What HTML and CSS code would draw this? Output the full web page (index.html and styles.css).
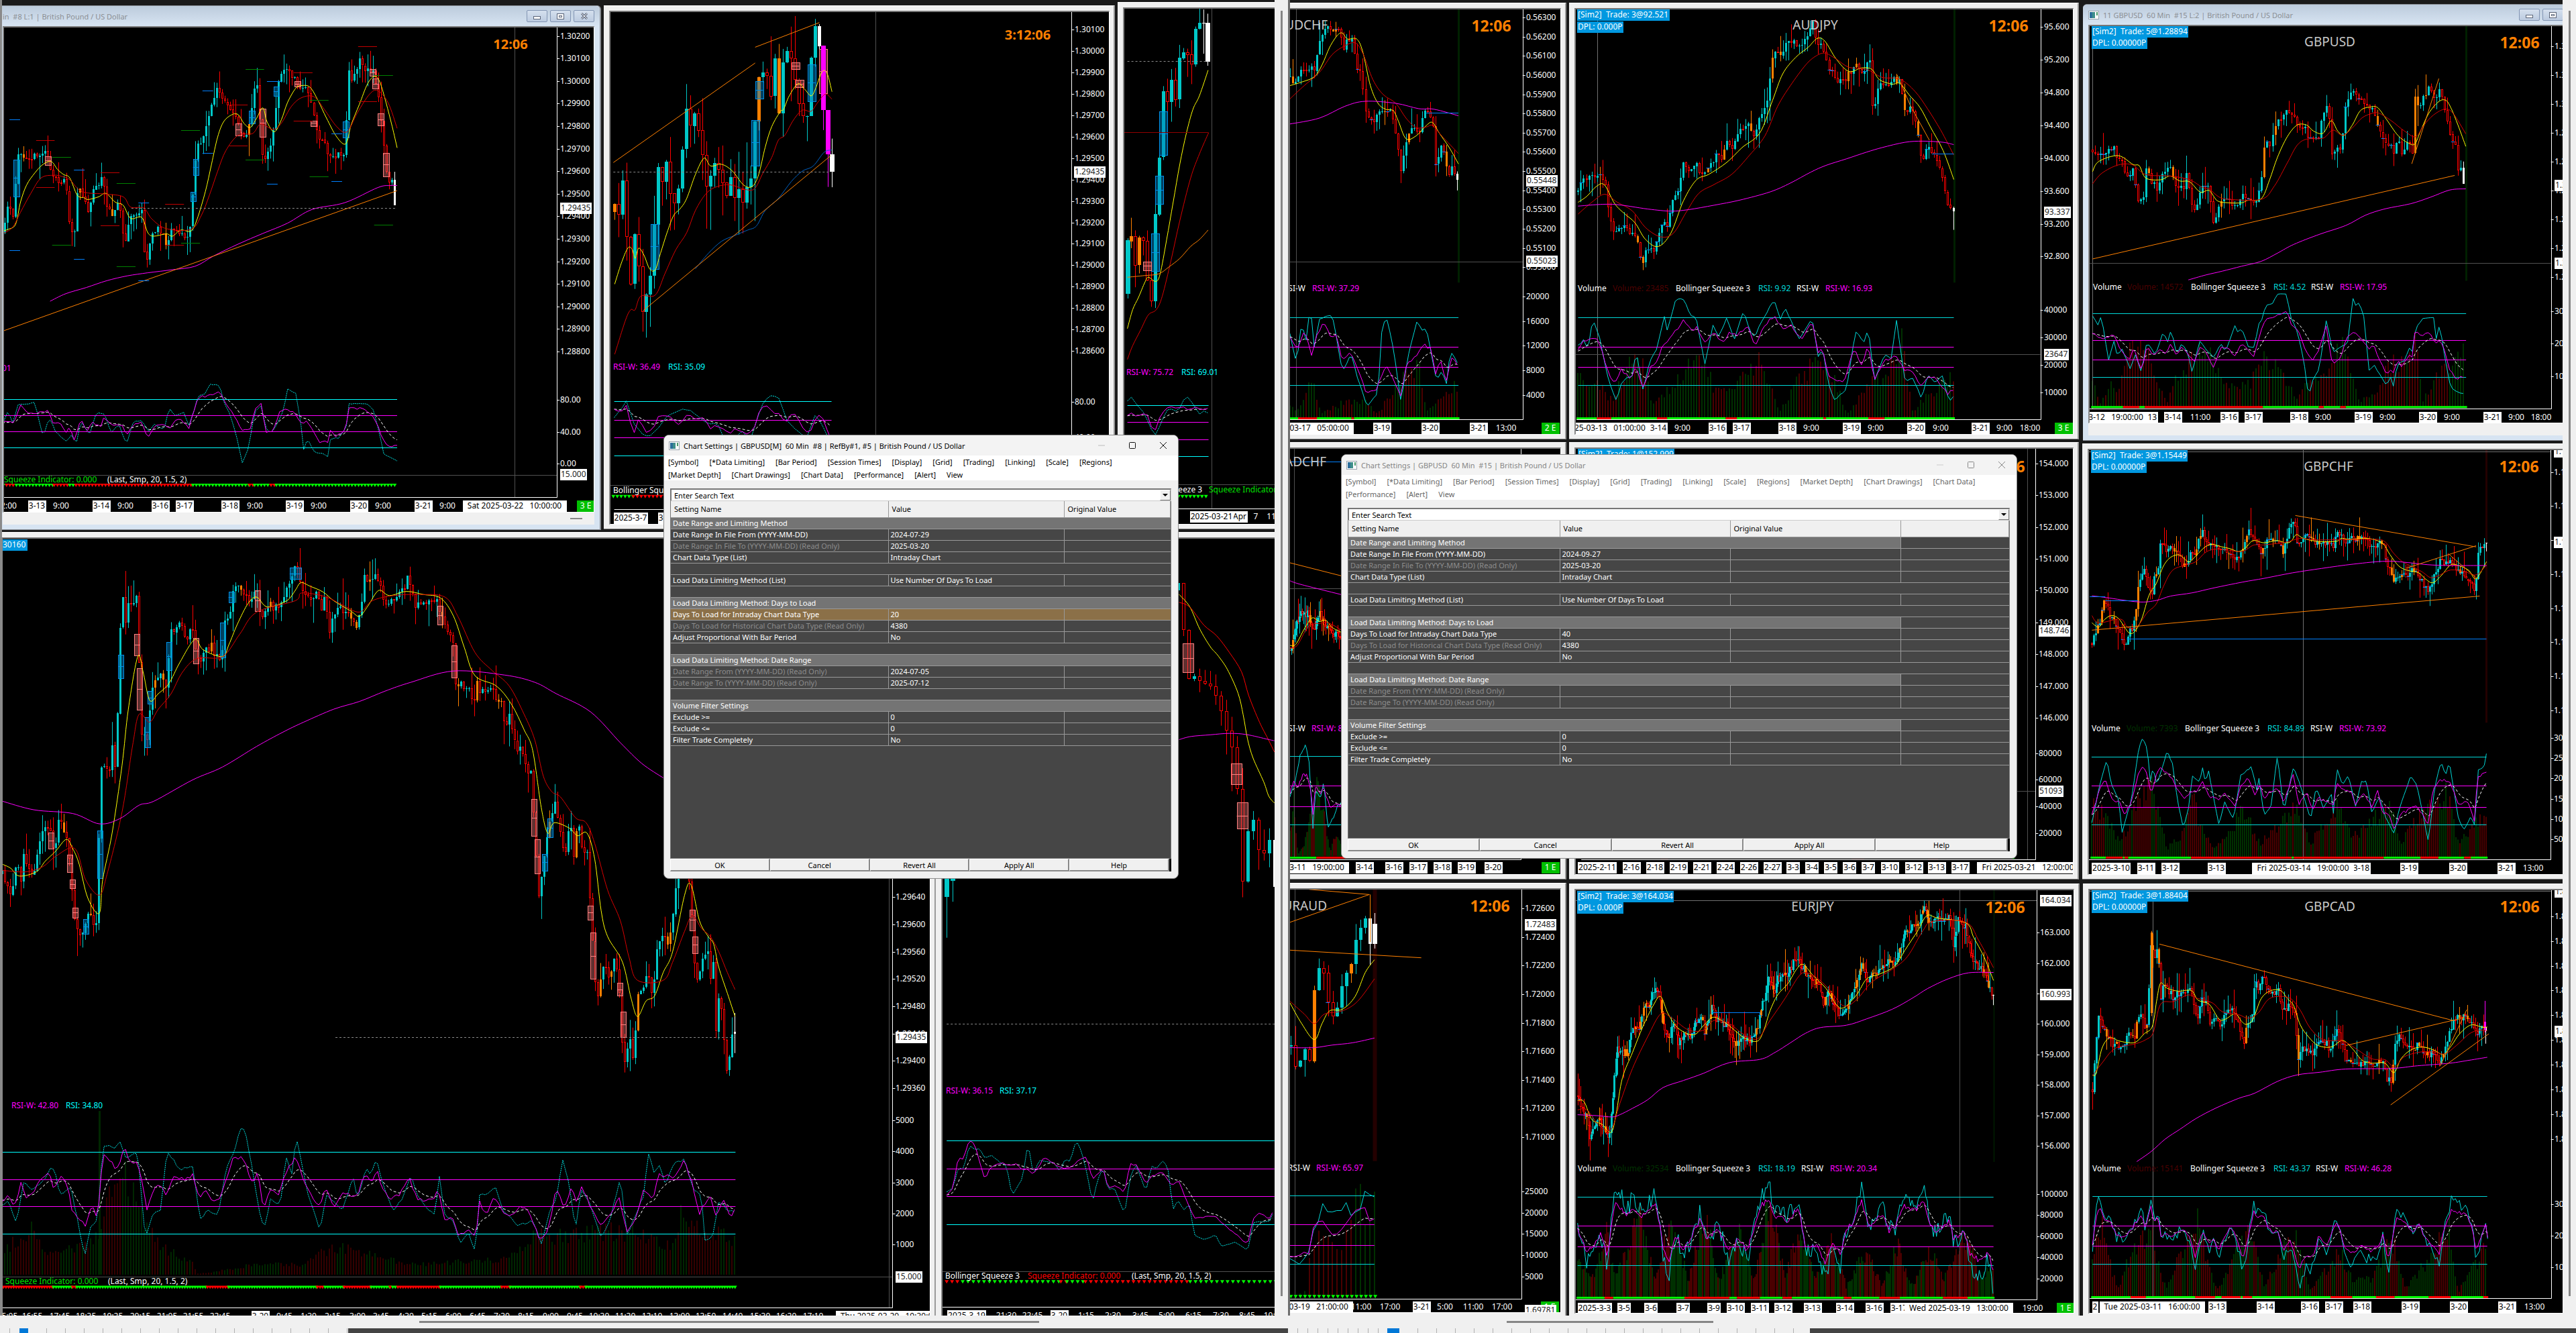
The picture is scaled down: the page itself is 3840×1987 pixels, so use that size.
FILE: index.html
```
<!DOCTYPE html>
<html lang="en">
<head>
<meta charset="utf-8">
<title>Trading desktop</title>
<link rel="stylesheet" href="styles.css">
</head>
<body>
<main class="desktop">
  <section class="workspace" id="ws1">
    <div class="mdi">
      <article class="win aero w-gbp60">
        <header class="titlebar"><h2>in  #8 L:1 | British Pound / US Dollar</h2>
          <span class="caps"><button class="cap" aria-label="Minimize"><i class="min"></i></button><button class="cap" aria-label="Restore"><i class="res"></i></button><button class="cap" aria-label="Close"><svg width="12" height="10"><path d="M2 1L10 9M10 1L2 9" stroke="#5a6478" stroke-width="3"/><path d="M2 1L10 9M10 1L2 9" stroke="#fff" stroke-width="1"/></svg></button></span>
        </header>
        <svg class="chart" id="cA"></svg>
        <div class="hscroll"><span></span></div>
      </article>
      <article class="win w-gbp240"><svg class="chart" id="cB"></svg></article>
      <article class="win w-gbpday"><svg class="chart" id="cC"></svg></article>
      <article class="win w-gbp5"><svg class="chart" id="cD"></svg></article>
      <article class="win w-gbp15"><svg class="chart" id="cE"></svg></article>
      <i class="leftedge"></i>
    </div>
    <div class="vbar"><i></i></div>
    <div class="hbar h1"><i></i></div>
    <div class="tabs t1"><b></b></div>
  </section>
  <section class="workspace second" id="ws2">
    <div class="mdi">
      <article class="win w-audchf"><svg class="chart" id="cF"></svg></article>
      <article class="win w-audjpy"><svg class="chart" id="cG"></svg></article>
      <article class="win aero w-gbpusd">
        <header class="titlebar"><svg class="appicon" width="16" height="13"><use href="#app"/></svg><h2>11 GBPUSD  60 Min  #15 L:2 | British Pound / US Dollar</h2>
          <span class="caps"><button class="cap" aria-label="Minimize"><i class="min"></i></button><button class="cap" aria-label="Restore"><i class="res"></i></button></span>
        </header>
        <svg class="chart" id="cH"></svg>
        <div class="hscroll"></div>
      </article>
      <article class="win w-cadchf"><svg class="chart" id="cI"></svg></article>
      <article class="win w-cadjpy"><svg class="chart" id="cJ"></svg></article>
      <article class="win w-gbpchf"><svg class="chart" id="cK"></svg></article>
      <article class="win w-euraud"><svg class="chart" id="cL"></svg></article>
      <article class="win w-eurjpy"><svg class="chart" id="cM"></svg></article>
      <article class="win w-gbpcad"><svg class="chart" id="cN"></svg></article>
    </div>
    <div class="vbar"><i></i></div>
    <div class="hbar h2"><i></i></div>
    <div class="tabs t2"><b></b></div>
  </section>

  <section class="dialog d1" role="dialog" aria-label="Chart Settings">
    <header><svg class="appicon" width="16" height="13"><use href="#app"/></svg><h2>Chart Settings | GBPUSD[M]  60 Min  #8 | RefBy#1, #5 | British Pound / US Dollar</h2>
      <span class="wbtns"><button aria-label="Minimize"><svg width="12" height="12"><path d="M1 6H11" stroke="#bbb"/></svg></button><button aria-label="Maximize"><svg width="12" height="12"><rect x="1.500" y="1.500" width="9" height="9" rx="1" fill="none" stroke="#111"/></svg></button><button aria-label="Close"><svg width="12" height="12"><path d="M1 1L11 11M11 1L1 11" stroke="#111"/></svg></button></span>
    </header>
    <nav><button>[Symbol]</button><button>[*Data Limiting]</button><button>[Bar Period]</button><button>[Session Times]</button><button>[Display]</button><button>[Grid]</button><button>[Trading]</button><button>[Linking]</button><button>[Scale]</button><button>[Regions]</button><button>[Market Depth]</button><button>[Chart Drawings]</button><button>[Chart Data]</button><button>[Performance]</button><button>[Alert]</button><button>View</button></nav>
    <div class="body">
      <div class="combo"><input type="text" value="Enter Search Text" aria-label="Search settings"><button aria-label="Open list"></button></div>
      <div class="grid">
        <table>
          <colgroup><col class="c-name"><col class="c-val"><col></colgroup>
          <thead><tr><th>Setting Name</th><th>Value</th><th>Original Value</th></tr></thead>
          <tbody>
            <tr class="sec"><td colspan="3">Date Range and Limiting Method</td></tr>
            <tr><td>Date Range In File From (YYYY-MM-DD)</td><td>2024-07-29</td><td></td></tr>
            <tr class="ro"><td>Date Range In File To (YYYY-MM-DD) (Read Only)</td><td>2025-03-20</td><td></td></tr>
            <tr><td>Chart Data Type (List)</td><td>Intraday Chart</td><td></td></tr>
            <tr><td colspan="3"></td></tr>
            <tr><td>Load Data Limiting Method (List)</td><td>Use Number Of Days To Load</td><td></td></tr>
            <tr><td colspan="3"></td></tr>
            <tr class="sec"><td colspan="3">Load Data Limiting Method: Days to Load</td></tr>
            <tr class="sel"><td>Days To Load for Intraday Chart Data Type</td><td>20</td><td></td></tr>
            <tr class="ro"><td>Days To Load for Historical Chart Data Type (Read Only)</td><td>4380</td><td></td></tr>
            <tr><td>Adjust Proportional With Bar Period</td><td>No</td><td></td></tr>
            <tr><td colspan="3"></td></tr>
            <tr class="sec"><td colspan="3">Load Data Limiting Method: Date Range</td></tr>
            <tr class="ro"><td>Date Range From (YYYY-MM-DD) (Read Only)</td><td>2024-07-05</td><td></td></tr>
            <tr class="ro"><td>Date Range To (YYYY-MM-DD) (Read Only)</td><td>2025-07-12</td><td></td></tr>
            <tr><td colspan="3"></td></tr>
            <tr class="sec"><td colspan="3">Volume Filter Settings</td></tr>
            <tr><td>Exclude &gt;=</td><td>0</td><td></td></tr>
            <tr><td>Exclude &lt;=</td><td>0</td><td></td></tr>
            <tr><td>Filter Trade Completely</td><td>No</td><td></td></tr>
          </tbody>
        </table>
      </div>
      <footer><button>OK</button><button>Cancel</button><button>Revert All</button><button>Apply All</button><button>Help</button></footer>
    </div>
  </section>

  <section class="dialog d2 inactive" role="dialog" aria-label="Chart Settings">
    <header><svg class="appicon" width="16" height="13"><use href="#app"/></svg><h2>Chart Settings | GBPUSD  60 Min  #15 | British Pound / US Dollar</h2>
      <span class="wbtns"><button aria-label="Minimize"><svg width="12" height="12"><path d="M1 6H11" stroke="#ccc"/></svg></button><button aria-label="Maximize"><svg width="12" height="12"><rect x="1.500" y="1.500" width="9" height="9" rx="1" fill="none" stroke="#888"/></svg></button><button aria-label="Close"><svg width="12" height="12"><path d="M1 1L11 11M11 1L1 11" stroke="#888"/></svg></button></span>
    </header>
    <nav><button>[Symbol]</button><button>[*Data Limiting]</button><button>[Bar Period]</button><button>[Session Times]</button><button>[Display]</button><button>[Grid]</button><button>[Trading]</button><button>[Linking]</button><button>[Scale]</button><button>[Regions]</button><button>[Market Depth]</button><button>[Chart Drawings]</button><button>[Chart Data]</button><button>[Performance]</button><button>[Alert]</button><button>View</button></nav>
    <div class="body">
      <div class="combo"><input type="text" value="Enter Search Text" aria-label="Search settings"><button aria-label="Open list"></button></div>
      <div class="grid">
        <table>
          <colgroup><col class="c-name"><col class="c-val"><col class="c-orig"><col></colgroup>
          <thead><tr><th>Setting Name</th><th>Value</th><th>Original Value</th><th></th></tr></thead>
          <tbody>
            <tr class="sec"><td colspan="3">Date Range and Limiting Method</td><td></td></tr>
            <tr><td>Date Range In File From (YYYY-MM-DD)</td><td>2024-09-27</td><td></td><td></td></tr>
            <tr class="ro"><td>Date Range In File To (YYYY-MM-DD) (Read Only)</td><td>2025-03-20</td><td></td><td></td></tr>
            <tr><td>Chart Data Type (List)</td><td>Intraday Chart</td><td></td><td></td></tr>
            <tr><td colspan="4"></td></tr>
            <tr><td>Load Data Limiting Method (List)</td><td>Use Number Of Days To Load</td><td></td><td></td></tr>
            <tr><td colspan="4"></td></tr>
            <tr class="sec"><td colspan="3">Load Data Limiting Method: Days to Load</td><td></td></tr>
            <tr><td>Days To Load for Intraday Chart Data Type</td><td>40</td><td></td><td></td></tr>
            <tr class="ro"><td>Days To Load for Historical Chart Data Type (Read Only)</td><td>4380</td><td></td><td></td></tr>
            <tr><td>Adjust Proportional With Bar Period</td><td>No</td><td></td><td></td></tr>
            <tr><td colspan="4"></td></tr>
            <tr class="sec"><td colspan="3">Load Data Limiting Method: Date Range</td><td></td></tr>
            <tr class="ro"><td>Date Range From (YYYY-MM-DD) (Read Only)</td><td></td><td></td><td></td></tr>
            <tr class="ro"><td>Date Range To (YYYY-MM-DD) (Read Only)</td><td></td><td></td><td></td></tr>
            <tr><td colspan="4"></td></tr>
            <tr class="sec"><td colspan="3">Volume Filter Settings</td><td></td></tr>
            <tr><td>Exclude &gt;=</td><td>0</td><td></td><td></td></tr>
            <tr><td>Exclude &lt;=</td><td>0</td><td></td><td></td></tr>
            <tr><td>Filter Trade Completely</td><td>No</td><td></td><td></td></tr>
          </tbody>
        </table>
      </div>
      <footer><button>OK</button><button>Cancel</button><button>Revert All</button><button>Apply All</button><button>Help</button></footer>
    </div>
  </section>
</main>
<svg class="defs" width="0" height="0"><symbol id="app" viewBox="0 0 16 13"><rect x="0.500" y="0.500" width="15" height="12" fill="#fff" stroke="#9aa4ae"/><rect x="2" y="2" width="8" height="9" fill="#3f8f8a"/><rect x="2" y="2" width="4" height="9" fill="#2c6f9a"/><rect x="12" y="2" width="2" height="5" fill="#4a9a6a"/></symbol></svg>
<script src="charts.js"></script>
</body>
</html>
```
FILE: styles.css
```
* { box-sizing: border-box; }
html, body { margin: 0; height: 100%; }
body { font-family: "Noto Sans", "Open Sans", sans-serif; font-size: 11px; background: #1a1a1a; color: #000; }
h2 { margin: 0; font-size: 11px; font-weight: 400; white-space: pre; }
button { font: inherit; color: inherit; padding: 0; margin: 0; border: 0; background: none; white-space: nowrap; }
.defs { position: absolute; }

.desktop { position: relative; display: flex; min-height: 100vh; overflow: hidden; }
.workspace { flex: 1; display: grid; grid-template-columns: 1fr 20px; grid-template-rows: 1fr 19px 7px; overflow: hidden; }
.mdi { position: relative; overflow: hidden; background: #1a1a1a; }
.second .mdi { border-left: 3px solid #6e6e6e; }
.leftedge { position: absolute; left: 0; top: 0; bottom: 0; width: 3px; background: #8a8a8a; }
.vbar { grid-row: 1 / 3; grid-column: 2; background: #f0f0f0; display: flex; justify-content: center; padding: 16px 0 48px; }
.vbar i { width: 3px; background: #868686; }
.hbar { background: #f0f0f0; display: flex; align-items: center; }
.hbar i { height: 3px; background: #868686; }
.h1 i { margin-left: 625px; width: 924px; }
.h2 i { margin-left: 326px; width: 308px; }
.tabs { grid-column: 1 / 3; background: #444; display: flex; }
.tabs::before { content: ""; background: #f0f0f0 repeating-linear-gradient(90deg, #f0f0f0 0 14px, #b0b0b0 14px 15px); width: 29px; }
.tabs b { background: #0078d7; width: 13px; }
.tabs::after { content: ""; background: #f0f0f0 repeating-linear-gradient(90deg, #f0f0f0 0 27px, #b0b0b0 27px 28px); width: 477px; }
.t2::before { width: 148px; }
.t2 b { width: 18px; }
.t2::after { width: 612px; }

/* MDI child windows */
.win { position: absolute; display: flex; flex-direction: column; background: #f0f0f0; padding: 7px 6px 6px 8px; border-top: 1px solid #fff; border-right: 2px solid #9a9a9a; border-bottom: 1px solid #777; }
.chart { flex: 1; display: block; width: 100%; min-height: 0; background: #000; border-top: 2px solid #777; border-left: 2px solid #888; border-right: 1px solid #fff; border-bottom: 1px solid #fff; overflow: hidden; }
.aero { background: #d7e4f2; padding: 0 8px 7px; border-color: #8a8f96; border-radius: 6px 6px 0 0; }
.aero .hscroll { height: 18px; background: #f0f0f0; display: flex; align-items: center; justify-content: flex-end; padding-right: 18px; }
.hscroll span { width: 18px; height: 2px; background: #868686; }
.titlebar { display: flex; align-items: center; height: 30px; gap: 6px; margin: 0 -8px; padding: 0 8px; background: linear-gradient(#bccbdc, #d7e4f2); border-radius: 6px 6px 0 0; color: #8b8f94; }
.caps { margin-left: auto; display: flex; gap: 4px; }
.cap { width: 31px; height: 18px; border: 1px solid #8295b3; border-radius: 2px; background: linear-gradient(#d5e0ee, #bccbe0); display: flex; align-items: center; justify-content: center; }
.min { width: 11px; height: 5px; margin-top: 4px; border: 1px solid #5a6478; background: #fff; }
.res { width: 11px; height: 9px; border: 1px solid #5a6478; background: #fff; padding: 2px; box-shadow: inset 0 0 0 2px #fff, inset 0 0 0 3px #5a6478; }
.w-gbp60 { left: -4px; top: 8px; width: 900px; height: 782px; }
.w-gbp240 { left: 900px; top: 8px; width: 762px; height: 781px; }
.w-gbpday { left: 1666px; top: 3px; width: 762px; height: 786px; }
.w-gbp5 { left: -6px; top: 793px; width: 1401px; height: 1180px; }
.w-gbp15 { left: 1395px; top: 793px; width: 762px; height: 1180px; }
.w-audchf { left: -523px; top: 4px; width: 935px; height: 651px; }
.w-audjpy { left: 416px; top: 4px; width: 760px; height: 651px; }
.w-gbpusd { left: 1182px; top: 6px; width: 760px; height: 651px; }
.w-gbpusd .caps { margin-right: 34px; }
.w-cadchf { left: -523px; top: 659px; width: 935px; height: 652px; }
.w-cadjpy { left: 416px; top: 659px; width: 760px; height: 652px; }
.w-gbpchf { left: 1181px; top: 661px; width: 760px; height: 650px; }
.w-euraud { left: -523px; top: 1316px; width: 935px; height: 648px; }
.w-eurjpy { left: 416px; top: 1317px; width: 761px; height: 648px; }
.w-gbpcad { left: 1182px; top: 1317px; width: 760px; height: 648px; }

/* settings dialogs */
.dialog { position: absolute; display: flex; flex-direction: column; background: #f0f0f0; border: 1px solid #8c8c8c; border-radius: 8px; overflow: hidden; }
.d1 { left: 989px; top: 648px; width: 768px; height: 662px; }
.d2 { left: 1999px; top: 677px; width: 1008px; height: 603px; }
.dialog header { display: flex; align-items: center; gap: 6px; height: 30px; padding: 0 6px 0 7px; background: #f3f3f3; }
.wbtns { margin-left: auto; display: flex; gap: 34px; padding-right: 10px; }
.wbtns button, .wbtns svg { display: block; width: 12px; height: 12px; }
.dialog nav { display: flex; flex-wrap: wrap; align-content: flex-start; gap: 0 16px; padding: 0 6px; background: #fff; height: 37px; }
.d1 nav { padding-right: 80px; }
.dialog nav button { height: 19px; line-height: 19px; }
.inactive header { color: #858585; }
.inactive nav { color: #666; }
.body { flex: 1; display: flex; flex-direction: column; min-height: 0; padding: 12px 10px 10px 9px; }
.combo { display: flex; height: 19px; background: #fff; border: 2px solid #777; border-right: 1px solid #ccc; border-bottom: 1px solid #ccc; }
.combo input { flex: 1; min-width: 0; border: 0; padding: 0 4px; font: inherit; background: #fff; }
.combo button { width: 16px; background: #f0f0f0; border: 1px solid #fff; border-right-color: #777; border-bottom-color: #777; display: flex; align-items: center; justify-content: center; }
.combo button::after { content: ""; border: 4px solid transparent; border-top-color: #000; border-bottom: 0; }
.grid { flex: 1; min-height: 0; background: #464646; border: 1px solid #777; border-top: 0; }
table { width: 100%; table-layout: fixed; border-collapse: collapse; }
.c-name { width: 324px; }
.c-val { width: 262px; }
.d2 .c-name { width: 315px; }
.d2 .c-val, .d2 .c-orig { width: 254px; }
th { height: 24px; padding: 0 5px; text-align: left; font-weight: 400; background: #f0f0f0; border-right: 1px solid #999; }
td { height: 17px; padding: 0 3px; line-height: 15px; color: #fff; border: 1px solid #999; white-space: nowrap; overflow: hidden; }
td:first-child { border-left: 0; }
td:last-child { border-right: 0; }
.sec td:first-child { background: #747474; }
.d2 .sec td:last-child { border-left: 0; }
.ro td:first-child { color: #8c8c8c; }
.sel td { background: #8b7048; }
.dialog footer { display: flex; height: 19px; background: #000; padding-right: 3px; }
.dialog footer button { flex: 1; background: #f0f0f0; border: 1px solid #fff; border-right: 2px solid #888; border-bottom: 2px solid #888; }

/* chart lettering */
.chart text { font-size: 12px; white-space: pre; }
.chart .timer { font-size: 20px; font-weight: 700; }
.second .timer { font-size: 23px; }
.chart .symbol { font-size: 19px; }
```
FILE: charts.js
```
const NS = 'http://www.w3.org/2000/svg';
const CY = '#00c8c8', RD = '#ff0000', YL = '#ffff00', MG = '#ff00ff', OR = '#ff8000', WH = '#ffffff', BL = '#0080ff',
  GR = '#00e000', LV = '#00ffff', GY = '#505050', DR = '#4a0000', DG = '#003000';

// Each chart is drawn in its own units; (ox, oy) is the desktop position of 0,0 and (kx, ky) the size of a unit.
function chart(id, ox, oy, kx, ky, seed) {
  const svg = document.getElementById(id), ws = svg.closest('.workspace').getBoundingClientRect(), r = svg.getBoundingClientRect();
  const g = document.createElementNS(NS, 'g');
  g.setAttribute('transform', `translate(${-Math.round(r.left - ws.left) - 2},${-Math.round(r.top - ws.top) - 2})`);
  svg.appendChild(g);
  let s = seed || 7;
  const rnd = () => (s = (s * 16807) % 2147483647) / 2147483647;
  const X = x => ox + x * kx, Y = y => oy + y * ky;
  const el = (n, a, t) => { const e = document.createElementNS(NS, n); for (const k in a) e.setAttribute(k, a[k]); if (t != null) e.textContent = t; g.appendChild(e); return e; };
  const parse = p => p.trim().split(/\s+/).map(q => q.split(',').map(Number));
  const at = (pts, x) => {
    if (x <= pts[0][0]) return pts[0][1];
    for (let i = 1; i < pts.length; i++) if (x <= pts[i][0]) { const [a, b] = pts[i - 1], [c, d] = pts[i]; return b + (d - b) * (x - a) / (c - a || 1); }
    return pts[pts.length - 1][1];
  };
  const f = n => n.toFixed(1), hp = n => Math.round(n) + 0.5;
  const c = {
    map(a, b, d, e) { ox = a; oy = b; kx = d; ky = e; return c; },
    poly(col, pts, w, dash) {
      el('path', { d: 'M' + pts.map(p => f(X(p[0])) + ' ' + f(Y(p[1]))).join('L'), fill: 'none', stroke: col, 'stroke-width': w || 1, 'stroke-dasharray': dash || 'none' });
      return c;
    },
    line(col, p, w, dash) { return c.poly(col, parse(p), w, dash); },
    curve(col, p, w) {
      const q = parse(p).map(v => [X(v[0]), Y(v[1])]); let d = 'M' + f(q[0][0]) + ' ' + f(q[0][1]);
      for (let i = 0; i < q.length - 1; i++) {
        const a = q[i - 1] || q[i], b = q[i], e = q[i + 1], h = q[i + 2] || e;
        d += 'C' + [b[0] + (e[0] - a[0]) / 6, b[1] + (e[1] - a[1]) / 6, e[0] - (h[0] - b[0]) / 6, e[1] - (h[1] - b[1]) / 6, e[0], e[1]].map(f).join(' ');
      }
      el('path', { d, fill: 'none', stroke: col, 'stroke-width': w || 1 }); return c;
    },
    h(y, x0, x1, col, w) { el('path', { d: `M${X(x0)} ${hp(Y(y))}H${X(x1)}`, stroke: col || GY, 'stroke-width': w || 1 }); return c; },
    v(x, y0, y1, col, w) { el('path', { d: `M${hp(X(x))} ${Y(y0)}V${Y(y1)}`, stroke: col || GY, 'stroke-width': w || 1 }); return c; },
    dash(y, x0, x1) { el('path', { d: `M${X(x0)} ${hp(Y(y))}H${X(x1)}`, stroke: '#8a8a8a', 'stroke-dasharray': '3 3' }); return c; },
    bar(x, w, o, cl, hi, lo, col, hollow) {
      const px = Math.round(X(x)), a = Math.min(Y(o), Y(cl)), b = Math.max(Y(o), Y(cl)), hw = Math.max(1, Math.floor(w / 2));
      el('path', { d: `M${px + 0.5} ${f(Y(hi))}V${f(hollow ? a : Y(lo))}` + (hollow ? `M${px + 0.5} ${f(b)}V${f(Y(lo))}` : ''), stroke: col });
      if (hollow) el('rect', { x: px - hw + 0.5, y: Math.round(a) + 0.5, width: hw * 2, height: Math.max(1, Math.round(b - a) - 1), fill: '#000', stroke: col });
      else el('rect', { x: px - hw, y: Math.round(a), width: hw * 2 + 1, height: Math.max(1, Math.round(b - a)), fill: col });
      return c;
    },
    candles(p, step, o = {}) {
      const pts = parse(p), n = o.noise ?? 9, w = Math.min(7, Math.max(2, step * kx * 0.7)), end = pts[pts.length - 1][0]; let prev = pts[0][1];
      for (let x = pts[0][0]; x <= end + 0.1; x += step) {
        let y = at(pts, x) + (rnd() - 0.5) * n * 1.2;
        const up = y < prev, hi = Math.min(y, prev) - rnd() * rnd() * n * 4, lo = Math.max(y, prev) + rnd() * rnd() * n * 4;
        const org = rnd() < (o.orange || 0);
        if (x + step > end + 0.1) c.bar(x, w, prev, at(pts, end), hi, lo + n, WH);
        else if (org) c.bar(x, w, prev, y, hi, lo, OR);
        else c.bar(x, w, prev, y, hi, lo, up ? CY : RD, !up);
        if (o.blue && rnd() < 0.15) el('path', { d: `M${X(x - step / 2)} ${hp(Y(y))}h6`, stroke: BL });
        prev = y;
      }
      return c;
    },
    boxes(col, list) {
      const fill = col === 'b' ? '#0080c080' : '#ff808060', st = col === 'b' ? '#0090e8' : '#ff8080';
      list.forEach(([x, y, w, h]) => {
        el('rect', { x: hp(X(x)), y: hp(Y(y)), width: Math.round(w * kx), height: Math.round(h * ky), fill, stroke: st });
        el('path', { d: `M${X(x)} ${hp(Y(y + h / 2))}h${w * kx}`, stroke: st });
      });
      return c;
    },
    volume(p, step, base, colors) {
      const [down, up] = colors || [DR, DG], pts = parse(p), end = pts[pts.length - 1][0]; let col = down;
      for (let x = pts[0][0]; x <= end; x += step) {
        if (rnd() < 0.3) col = col === down ? up : down;
        const top = base - (base - at(pts, x)) * (0.75 + rnd() * 0.45);
        el('rect', { x: Math.round(X(x)) - 1, y: f(Y(top)), width: 2, height: f(Y(base) - Y(top)), fill: col });
      }
      return c;
    },
    // levels: upper cyan, upper magenta, lower magenta, lower cyan
    rsi(lv, x0, x1, p, cy, o = {}) {
      const m = parse(p), mid = (lv[0] + lv[3]) / 2, step = o.step || 5, jit = o.jit ?? 10, mm = [], cc = [], ww = []; let e = m[0][1], cp = cy && parse(cy);
      for (let x = m[0][0]; x <= m[m.length - 1][0] + 0.1; x += step) {
        const y = at(m, x) + (rnd() - 0.5) * jit;
        mm.push([x, y]); e += (y - e) * 0.22; ww.push([x, e]);
        cc.push([x, cp ? at(cp, x) + (rnd() - 0.5) * jit * 0.5 : mid + (y - mid) * 1.45 + (rnd() - 0.5) * jit * 3]);
      }
      c.poly(o.dots ? '#00e0e0' : '#00d8d8', cc, 1, o.dots ? '2 1' : null);
      c.h(lv[0], x0, x1, o.dots ? LV : '#00d8d8').h(lv[1], x0, x1, MG).h(lv[2], x0, x1, MG).h(lv[3], x0, x1, o.dots ? LV : '#00d8d8');
      c.poly(WH, ww, 1, '4 3').poly(MG, mm);
      return c;
    },
    squeeze(y, step, segs) {
      for (let i = 0; i < segs.length - 1; i += 2) {
        let d = ''; for (let x = segs[i]; x < segs[i + 2]; x += step) d += `M${f(X(x) - 3)} ${Y(y) - 2}h6l-3 5z`;
        el('path', { d, fill: segs[i + 1] === 'g' ? '#00ff00' : '#ff0000' });
      }
      return c;
    },
    band(y, segs) {
      for (let i = 0; i < segs.length - 1; i += 2) el('path', { d: `M${X(segs[i])} ${Y(y)}H${X(segs[i + 2])}`, stroke: segs[i + 1] === 'g' ? '#00ff00' : '#ff0000', 'stroke-width': 3 });
      return c;
    },
    text(t, x, y, col, anchor, cls) { el('text', { x: Math.round(X(x)), y: Math.round(Y(y)) + (cls === 'timer' || cls === 'symbol' ? 7 : 4), fill: col || WH, 'text-anchor': anchor || 'start', class: cls || 'lbl' }, t); return c; },
    timer(t, x, y) { return c.text(t, x, y, OR, 'middle', 'timer'); },
    symbol(t, x, y, a) { return c.text(t, x, y, '#c8c8c8', a || 'middle', 'symbol'); },
    tag(t, x, y, bg, fg, anchor, padX, padY) {
      const e = el('text', { x: Math.round(X(x)), y: Math.round(Y(y)) + 4, fill: fg, 'text-anchor': anchor, class: 'lbl' }, t), w = e.getComputedTextLength(), px = padX ?? 1, h = padY || 17;
      const left = anchor === 'middle' ? Math.round(X(x)) - w / 2 : anchor === 'end' ? Math.round(X(x)) - w : Math.round(X(x));
      const b = el('rect', { x: Math.round(left) - px, y: Math.round(Y(y)) - Math.floor(h / 2), width: Math.ceil(w) + px * 2, height: h, fill: bg });
      g.insertBefore(b, e); return c;
    },
    scale(x, y0, y1, first, last, n, dec) {
      for (let i = 0; i < n; i++) {
        const y = y0 + (y1 - y0) * i / (n - 1);
        el('path', { d: `M${X(x)} ${hp(Y(y))}h4`, stroke: WH }); c.text((first + (last - first) * i / (n - 1)).toFixed(dec), x + 5 / kx, y);
      }
      return c;
    },
    mark(t, x, y) { return c.tag(t, x + 6 / kx, y, WH, '#222', 'start'); },
    axes(x, y, x0, y0) { el('path', { d: `M${hp(X(x))} ${Y(y0)}V${hp(Y(y))}H${X(x0)}`, stroke: WH, fill: 'none' }); return c; },
    times(y, list) {
      list.split('|').forEach(q => {
        const [t, x, b] = q.split('@'), big = t.length > 12;
        if (b) c.tag(t, +x, y, WH, '#000', 'middle', big ? 7 : 1); else c.text(t, +x, y, WH, 'middle');
      });
      return c;
    },
    ext(t, x, y) { return c.tag(t, x, y, '#00c000', WH, 'middle', 5); },
    trade(a, b, x, y, y2) { return c.tag(a, x, y, '#0098e0', WH, 'start', 1).tag(b, x, y2, '#0098e0', WH, 'start', 1); },
    legend(y, list) { list.forEach(([t, x, col]) => c.text(t, x, y, col)); return c; }
  };
  return c;
}

// GBPUSD 60 min
chart('cA', 0, 0, .6122, .5102, 11)
  .v(1253, 80, 1453).h(1387, 5, 1356)
  .candles('5,690 20,600 32,640 45,430 55,450 90,460 110,440 120,480 140,540 160,520 170,680 182,680 190,530 205,580 215,620 225,560 250,520 258,590 275,625 290,590 303,720 318,630 345,620 355,800 362,710 385,660 405,710 420,660 455,700 465,650 478,430 490,420 505,350 528,260 545,300 580,350 590,400 605,380 625,225 640,460 655,450 668,370 680,215 695,200 720,235 735,270 745,245 765,340 775,420 785,400 797,455 840,455 845,200 855,230 875,175 890,210 905,200 918,260 933,420 945,540 955,530 966,600', 6.54, { noise: 17, orange: .03 })
  .boxes('b', [[32, 466, 14, 107], [470, 465, 13, 48], [464, 560, 13, 28], [606, 324, 14, 38], [666, 253, 13, 28], [835, 354, 14, 47]])
  .boxes('p', [[110, 456, 14, 25], [573, 360, 14, 35], [632, 317, 14, 82], [717, 237, 14, 16], [757, 352, 14, 15], [900, 201, 14, 20], [907, 230, 14, 30], [920, 332, 14, 35], [933, 447, 14, 68]])
  .curve(YL, '5,675 20,670 38,655 50,590 65,540 85,505 105,480 125,472 140,495 155,510 170,520 188,570 205,578 215,583 240,575 258,565 280,590 300,600 318,638 345,635 360,680 375,690 405,683 420,690 440,672 465,675 480,640 500,560 515,480 530,400 545,355 565,335 580,335 595,362 610,372 625,345 640,315 650,355 668,385 685,350 700,300 720,258 735,250 755,255 775,295 795,345 820,400 842,420 855,365 875,305 895,245 912,223 925,240 940,300 955,370 967,432')
  .curve('#d80000', '5,683 30,665 50,620 75,565 100,520 130,512 150,515 170,525 200,560 258,567 300,575 318,605 350,608 370,640 405,668 465,670 490,630 510,570 530,500 550,440 580,395 615,390 635,362 665,378 685,360 710,310 735,285 765,283 790,320 820,370 845,385 870,330 900,275 920,265 945,300 967,375')
  .curve(MG, '122,880 160,858 210,840 260,820 310,806 360,797 420,788 475,778 520,748 580,713 640,682 700,652 760,612 840,592 920,548 950,542 967,542')
  .line(OR, '5,968 967,557').dash(607, 320, 967)
  .h(458, 127, 173, '#008000').h(716, 127, 173, '#008000').h(409, 88, 133, '#c00000').h(546, 88, 133, '#c00000').h(348, 23, 49, BL).h(732, 23, 49, BL).h(495, 180, 206, BL).h(756, 180, 206, BL)
  .h(503, 245, 291, '#c00000').h(658, 245, 291, '#c00000').h(536, 284, 330, '#008000').h(779, 284, 330, '#008000').h(591, 337, 363, BL).h(820, 337, 363, BL).h(595, 402, 448, '#c00000').h(716, 402, 448, '#c00000')
  .h(381, 441, 487, '#008000').h(709, 441, 487, '#008000').h(264, 493, 519, BL).h(447, 493, 519, BL).h(305, 558, 603, '#c00000').h(426, 558, 603, '#c00000').h(201, 598, 643, '#008000').h(466, 598, 643, '#008000')
  .h(238, 650, 686, BL).h(538, 650, 676, BL).h(211, 715, 761, '#c00000').h(353, 715, 761, '#c00000').h(293, 754, 800, '#008000').h(516, 754, 800, '#008000').h(391, 807, 833, BL).h(530, 807, 833, BL)
  .h(136, 872, 918, '#c00000').h(295, 872, 918, '#c00000').h(220, 911, 957, '#008000').h(656, 911, 957, '#008000')
  .rsi([1167, 1214, 1261, 1308], 5, 967, '5,1235 15,1230 35,1235 50,1185 65,1205 80,1210 100,1205 118,1200 130,1240 145,1235 160,1265 170,1245 180,1290 197,1225 210,1260 225,1235 245,1245 253,1220 270,1240 300,1245 308,1275 325,1240 345,1235 360,1280 375,1245 400,1240 415,1250 430,1225 445,1230 460,1250 483,1160 500,1158 535,1145 550,1180 570,1215 590,1260 610,1250 622,1195 635,1178 648,1265 665,1260 680,1205 695,1195 715,1205 735,1235 748,1230 765,1265 778,1295 788,1285 797,1300 805,1255 815,1275 840,1260 850,1190 870,1195 885,1192 905,1210 918,1240 935,1290 950,1305 967,1300',
    '5,1240 20,1200 30,1240 45,1180 70,1180 85,1175 95,1230 105,1275 120,1220 135,1260 160,1290 175,1270 185,1300 197,1230 218,1270 235,1205 255,1210 270,1265 290,1240 308,1300 325,1230 345,1230 362,1260 375,1240 400,1255 412,1190 425,1215 450,1205 458,1250 475,1190 483,1155 500,1150 510,1123 535,1125 545,1175 560,1210 575,1270 590,1352 605,1310 620,1205 635,1185 650,1260 665,1260 690,1200 700,1135 720,1150 732,1230 740,1320 748,1280 765,1320 785,1325 798,1335 805,1280 825,1280 843,1250 850,1180 895,1180 910,1200 925,1270 935,1330 950,1335 967,1347', { dots: 1, step: 6.5, jit: 6 })
  .squeeze(1417, 8, [8, 'g', 16, 'r', 40, 'g', 132, 'r', 170, 'g', 185, 'r', 470, 'g', 608, 'r', 620, 'g', 660, 'r', 673, 'g', 968])
  .axes(1356, 1453, 5, 80).scale(1356, 105, 1027, 1.302, 1.288, 15, 5).scale(1356, 1168, 1355, 80, 0, 3, 2)
  .mark('1.29435', 1356, 607).mark('15.000', 1356, 1386).timer('12:06', 1243, 129)
  .legend(1076, [['01', 5, MG]]).legend(1401, [['Squeeze Indicator: 0.000', 9, GR], ['(Last, Smp, 20, 1.5, 2)', 262, WH]])
  .times(1478, '2:00@22|3-13@90@b|9:00@149|3-14@246@b|9:00@306|3-16@390@b|3-17@449@b|3-18@560@b|9:00@620|3-19@717@b|9:00@776|3-20@874@b|9:00@933|3-21@1030@b|9:00@1090|Sat 2025-03-22   10:00:00@1253@b').ext('3 E', 1426, 1478);

// GBPUSD 240 min
chart('cB', 900, 0, .6505, .5102, 23)
  .v(623, 33, 1488).h(1417, 15, 1072)
  .candles('24,620 33,650 42,540 55,725 65,910 72,565 80,800 88,908 98,870 108,810 118,600 126,495 135,540 145,460 153,545 165,620 175,510 188,320 200,380 208,350 218,380 228,470 238,568 248,480 258,460 268,490 282,560 292,505 301,612 310,540 320,585 330,560 338,510 348,330 357,205 372,205 383,290 393,170 403,340 411,155 421,135 431,175 441,230 450,310 459,358 468,310 477,130 486,90 494,135', 9.2, { noise: 40, orange: .1 })
  .boxes('b', [[338, 350, 18, 133], [347, 238, 18, 50], [467, 188, 18, 108], [107, 654, 18, 132]])
  .boxes('p', [[494, 143, 18, 130], [430, 182, 18, 20], [439, 234, 18, 22]])
  .bar(503, 6, 133, 322, 133, 380, MG).bar(513, 6, 322, 452, 322, 546, MG).bar(522, 6, 451, 502, 405, 547, WH)
  .curve(YL, '25,830 40,770 55,725 65,728 72,755 80,725 92,745 105,785 118,788 130,740 145,680 160,630 175,610 190,580 210,510 230,462 245,485 270,480 295,500 320,540 340,545 355,510 370,430 385,370 405,325 412,320 425,280 445,245 460,260 475,280 485,260 500,210 512,215 523,268')
  .curve('#d80000', '25,1035 50,935 62,905 72,905 85,865 118,862 140,800 165,730 190,680 210,615 235,565 260,545 290,540 320,552 345,552 365,505 385,460 400,410 415,395 435,350 455,322 475,325 490,300 508,275 523,290')
  .curve('#0060c0', '210,785 240,740 270,705 300,688 330,672 350,660 370,615 400,580 430,530 455,500 480,485 505,445 523,438')
  .line(OR, '22,475 347,184').line(OR, '347,138 494,66').line(OR, '90,908 520,455').dash(501, 22, 520)
  .rsi([1173, 1226, 1277, 1330], 24, 522, '24,1195 40,1205 52,1185 60,1230 70,1262 80,1225 97,1262 115,1250 125,1215 150,1215 173,1242 195,1205 205,1225 230,1220 247,1260 255,1242 290,1265 298,1250 330,1270 347,1245 355,1205 367,1185 378,1185 385,1205 398,1215 405,1200 415,1245 425,1210 440,1212 450,1235 462,1262 475,1258 487,1215 500,1215 522,1290',
    '24,1220 40,1195 52,1170 70,1240 90,1270 105,1275 125,1250 145,1215 180,1195 200,1200 215,1215 240,1240 260,1235 275,1280 300,1290 315,1255 335,1290 350,1230 367,1170 385,1155 405,1165 415,1220 435,1250 465,1280 485,1210 500,1240 515,1280 522,1290', { dots: 1, step: 9.2, jit: 4 })
  .squeeze(1450, 9, [22, 'g', 68, 'r', 300, 'g', 522])
  .axes(1072, 1488, 24, 33).scale(1072, 87, 1025, 1.301, 1.286, 16, 5).scale(1072, 1175, 1277, 80, 40, 2, 2)
  .mark('1.29435', 1070, 501).timer('3:12:06', 972, 101)
  .legend(1073, [['RSI-W: 36.49', 22, MG], ['RSI: 35.09', 147, LV]]).legend(1432, [['Bollinger Squeeze 3', 22, WH]])
  .times(1513, '2025-3-7@62@b|3-10@144@b');

// GBPUSD daily
chart('cC', 900, 0, .6505, .5102, 5)
  .v(1393, 22, 1485).h(1415, 1192, 1540)
  .bar(1200, 6, 858, 702, 696, 872, CY)
  .candles('1209,705 1218,785 1227,705 1237,690 1246,830 1255,878 1264,640 1273,465 1282,270 1291,295 1300,225 1310,300 1320,165 1329,142 1338,165 1347,200 1357,90 1366,68 1375,66', 9.2, { noise: 26, orange: .1 })
  .boxes('b', [[1273, 326, 19, 128], [1264, 514, 19, 83], [1255, 682, 18, 109]]).boxes('p', [[1236, 764, 19, 26]])
  .bar(1384, 6, 66, 180, 40, 192, WH)
  .curve(YL, '1200,960 1212,905 1225,870 1240,825 1248,810 1265,822 1275,800 1290,700 1305,590 1320,480 1335,390 1350,320 1365,280 1385,205')
  .curve('#d80000', '1200,1050 1212,1010 1230,965 1248,920 1266,905 1280,865 1300,760 1320,645 1345,520 1365,450 1386,388')
  .curve(OR, '1200,810 1240,805 1272,800 1295,780 1320,755 1345,720 1365,700 1385,672').h(387, 1190, 1386, '#900000').dash(179, 1200, 1385)
  .rsi([1183, 1232, 1283, 1332], 1200, 1386, '1200,1215 1210,1205 1220,1217 1237,1210 1246,1215 1256,1250 1266,1255 1275,1215 1290,1190 1305,1188 1315,1193 1325,1185 1340,1197 1357,1190 1370,1198 1386,1192',
    '1200,1172 1210,1160 1220,1180 1240,1210 1255,1255 1266,1272 1280,1225 1295,1190 1315,1205 1330,1165 1340,1160 1350,1180 1365,1210 1375,1200 1386,1208', { dots: 1, step: 9.2, jit: 3 })
  .squeeze(1450, 9, [1200, 'g', 1388]).axes(1600, 1485, 1192, 22)
  .legend(1087, [['RSI-W: 75.72', 1198, MG], ['RSI: 69.01', 1323, LV]]).legend(1430, [['Bollinger Squeeze 3', 1200, WH], ['Squeeze Indicator: 0.000', 1387, GR]])
  .times(1509, 'Apr@1457@b|2025-03-21@1393@b|7@1494|11@1530');

// GBPUSD 5 min
chart('cD', 0, 780, .6378, .7698, 31)
  .volume('5,1410 80,1360 100,1410 200,1400 230,1380 265,1280 290,1260 330,1330 380,1400 450,1430 460,1453 500,1450 590,1435 700,1435 780,1400 850,1410 950,1435 1180,1425 1240,1380 1320,1380 1400,1370 1470,1370 1570,1400 1590,1340 1719,1390', 6.27, 1455, ['#340000', '#002600'])
  .bar(232, 3, 1138, 1455, 1138, 1455, '#002600').v(2078, 28, 1519).h(1459, 5, 2086)
  .candles('5,680 28,720 40,650 50,690 55,640 75,690 85,650 100,590 115,590 122,620 130,630 138,570 150,600 158,620 165,690 175,770 190,795 203,760 215,760 222,800 228,720 234,470 245,465 255,480 262,430 268,470 275,370 284,120 292,190 302,150 310,165 318,130 323,230 330,400 345,430 353,320 372,285 390,320 397,210 412,200 428,200 435,230 447,195 457,240 465,270 480,240 495,240 505,260 518,260 522,195 535,180 547,120 560,120 585,150 600,130 610,180 622,165 630,150 640,170 655,150 668,130 680,120 690,70 705,120 722,150 740,130 752,165 756,130 770,205 785,165 805,165 832,205 845,150 850,95 860,120 878,95 885,110 895,145 910,160 925,135 945,130 952,105 970,160 990,150 1018,145 1030,180 1045,210 1058,230 1065,310 1095,320 1107,360 1113,310 1125,330 1150,315 1160,350 1175,350 1180,400 1192,370 1205,440 1218,430 1232,480 1240,470 1250,610 1258,730 1272,640 1285,580 1295,535 1305,590 1320,640 1332,570 1342,660 1350,565 1362,640 1372,640 1382,780 1395,930 1408,850 1425,890 1435,840 1445,880 1457,1050 1470,990 1480,1050 1490,910 1500,900 1512,870 1525,920 1533,820 1548,790 1563,820 1575,740 1588,650 1612,690 1625,890 1640,850 1655,830 1662,890 1668,830 1672,1000 1680,910 1690,980 1700,1070 1710,990 1719,985', 6.27, { noise: 14, orange: .05 })
  .boxes('b', [[276, 254, 13, 46], [227, 595, 12, 92], [389, 230, 13, 55], [514, 192, 13, 68], [339, 375, 13, 58], [534, 133, 13, 21], [677, 86, 26, 22], [1267, 640, 13, 32], [1280, 572, 13, 36], [195, 767, 13, 28], [345, 325, 13, 25]])
  .boxes('p', [[314, 214, 13, 42], [320, 281, 13, 80], [452, 222, 13, 50], [596, 130, 13, 40], [157, 642, 13, 34], [163, 690, 13, 17], [169, 744, 13, 19], [113, 599, 13, 31], [1055, 236, 12, 62], [1242, 534, 13, 72], [1249, 612, 13, 66], [1374, 740, 13, 27], [1380, 793, 13, 90], [1450, 946, 13, 50], [1443, 890, 13, 25], [1022, 160, 13, 36], [1612, 748, 13, 40], [1618, 800, 13, 32]])
  .curve(YL, '5,660 25,668 45,683 85,675 105,655 130,635 155,612 170,630 185,660 205,725 232,755 240,690 262,600 285,470 300,360 322,258 335,290 350,343 370,330 395,310 420,270 455,225 475,245 520,258 535,235 555,195 580,155 600,143 625,162 670,150 690,130 703,115 725,122 755,133 780,150 820,170 840,180 860,160 885,130 910,140 950,132 990,138 1030,145 1060,180 1085,240 1110,295 1160,315 1195,350 1225,400 1245,440 1265,550 1280,600 1295,580 1330,590 1350,605 1372,600 1390,650 1405,750 1420,800 1455,850 1475,920 1490,955 1510,925 1530,915 1550,870 1572,830 1600,720 1615,700 1635,770 1655,800 1668,815 1680,860 1700,910 1718,955')
  .curve('#d80000', '5,672 60,675 100,665 130,645 175,630 200,690 232,720 250,680 285,560 310,430 325,370 350,385 370,360 400,330 425,290 460,262 520,258 560,215 600,172 690,150 705,135 760,142 800,158 840,172 870,150 920,140 980,138 1040,143 1070,180 1110,250 1150,285 1190,315 1225,370 1250,420 1270,490 1290,520 1310,530 1345,570 1370,580 1390,620 1420,710 1450,770 1470,840 1490,885 1550,885 1572,850 1600,790 1618,760 1640,785 1660,800 1680,830 1700,870 1718,903')
  .curve(MG, '5,538 80,555 170,562 232,582 280,572 325,546 360,538 450,497 520,472 600,432 660,405 710,385 780,360 840,345 900,325 960,308 1060,286 1180,294 1250,308 1300,330 1380,365 1450,425 1500,465 1550,493')
  .dash(995, 784, 1716)
  .rsi([1217, 1270, 1323, 1376], 5, 1719, '5,1310 20,1300 35,1322 50,1275 60,1305 80,1290 100,1265 115,1260 125,1285 145,1265 155,1275 170,1335 200,1362 215,1320 228,1345 240,1225 255,1230 270,1250 283,1230 292,1208 305,1240 322,1235 335,1290 343,1332 360,1285 375,1285 390,1300 405,1262 430,1270 450,1262 465,1305 480,1290 495,1312 515,1308 530,1265 545,1230 570,1230 590,1280 603,1255 615,1330 635,1285 650,1300 665,1260 690,1230 705,1260 725,1300 747,1325 762,1285 778,1325 800,1300 835,1300 855,1255 865,1275 882,1255 895,1290 915,1310 935,1300 955,1265 975,1310 1010,1310 1025,1290 1040,1350 1055,1340 1070,1375 1095,1370 1112,1385 1120,1310 1135,1340 1155,1300 1170,1330 1195,1340 1225,1320 1245,1350 1262,1390 1280,1370 1300,1290 1318,1325 1335,1290 1350,1315 1358,1285 1385,1330 1405,1360 1425,1340 1447,1305 1465,1375 1485,1345 1505,1290 1525,1310 1540,1260 1560,1262 1575,1265 1600,1235 1615,1270 1635,1335 1660,1300 1675,1345 1690,1310 1710,1345 1719,1320',
    '5,1320 20,1310 38,1355 55,1275 75,1290 105,1270 118,1248 128,1250 140,1300 165,1285 180,1345 198,1418 212,1360 228,1350 240,1210 252,1203 268,1210 280,1198 295,1230 322,1218 340,1388 355,1340 375,1330 390,1218 405,1232 420,1252 450,1245 468,1348 485,1330 510,1338 530,1245 548,1215 560,1175 572,1172 590,1250 605,1330 617,1368 632,1310 655,1320 668,1225 682,1260 692,1185 705,1240 720,1300 748,1370 762,1300 800,1330 820,1280 825,1262 835,1310 855,1250 865,1260 880,1233 895,1280 918,1330 940,1310 960,1262 975,1300 1000,1330 1018,1340 1025,1255 1040,1340 1060,1350 1075,1395 1095,1375 1112,1412 1120,1300 1140,1300 1157,1282 1175,1330 1210,1360 1245,1350 1265,1395 1285,1330 1300,1310 1315,1230 1330,1280 1345,1370 1358,1290 1375,1310 1405,1385 1425,1350 1450,1268 1465,1380 1490,1330 1505,1300 1515,1218 1530,1260 1540,1240 1555,1280 1575,1240 1600,1232 1620,1290 1640,1300 1646,1389 1665,1385 1680,1310 1700,1330 1719,1335', { dots: 1, step: 6.27, jit: 8 })
  .squeeze(1479, 6, [8, 'r', 125, 'g', 170, 'r', 180, 'g', 485, 'r', 535, 'g', 742, 'r', 760, 'g', 805, 'r', 868, 'g', 912, 'r', 918, 'g', 930, 'r', 1030, 'g', 1173, 'r', 1193, 'g', 1357, 'r', 1370, 'g', 1723])
  .axes(2086, 1519, 5, 28).scale(2086, 724, 1094, 1.2964, 1.2936, 8, 5).scale(2086, 1156, 1397, 5000, 1000, 5, 0)
  .mark('1.29435', 2086, 995).mark('15.000', 2086, 1459).tag('30160', 7, 41, '#0098e0', WH, 'start', 2)
  .legend(1127, [['RSI-W: 42.80', 26, MG], ['RSI: 34.80', 153, LV]]).legend(1468, [['Squeeze Indicator: 0.000', 12, GR], ['(Last, Smp, 20, 1.5, 2)', 253, WH]])
  .times(1535, '15:05@18|16:55@76|17:45@139|18:35@201|19:25@264|20:15@327|21:05@390|21:55@452|22:45@515|3-20@608@b|0:45@665|1:30@722|2:15@778|3:00@835|3:45@891|4:30@948|5:15@1004|6:00@1060|6:45@1117|7:30@1173|8:15@1230|9:00@1287|9:45@1343|10:30@1400|11:20@1462|12:10@1524|13:00@1588|13:50@1650|14:40@1712|15:30@1776|16:20@1838|17:10@1900|Thu 2025-03-20   19:30:00@2078@b');

// GBPUSD 15 min
chart('cE', 1380, 780, .6378, .3571, 3)
  .candles('589,280 601,460 614,650 626,660 639,655 664,655 677,740 689,760 702,890 714,915 727,1090 739,1485 752,1300 764,1225 777,1350 789,1400 802,1295 815,1520', 12.55, { noise: 50 })
  .bar(49, 7, 1400, 1560, 1300, 1730, CY).bar(62, 7, 1380, 1492, 1300, 1580, CY)
  .boxes('p', [[601, 502, 25, 120], [714, 1003, 25, 87], [727, 1166, 25, 110]])
  .curve(YL, '592,297 617,348 640,440 665,515 682,550 705,610 730,710 742,800 752,900 765,980 790,1080 802,1140 815,1168')
  .curve(RD, '592,330 617,350 650,425 680,470 710,540 738,620 755,720 780,830 800,900 815,955')
  .curve(MG, '592,903 620,890 665,883 710,877 750,882 800,902 815,908')
  .map(960, 1300, .6122, .4381).h(1357, 727, 1540).dash(517, 737, 1536)
  .rsi([914, 1010, 1103, 1199], 737, 1535, '737,1098 752,1078 765,975 778,975 792,910 806,930 830,1045 843,1005 870,988 896,1000 908,992 922,1015 935,1010 948,1030 975,970 1015,1007 1040,1005 1060,978 1078,970 1092,1048 1118,1007 1130,1075 1145,1065 1170,1088 1184,992 1200,998 1222,1062 1235,1035 1262,1022 1285,1065 1302,1050 1340,1180 1390,1168 1405,1192 1440,1230 1470,1268 1482,1185 1497,1158 1524,1180 1535,1140',
    '737,1088 752,1075 765,1008 778,1010 792,930 806,945 818,940 830,975 845,962 870,990 883,1000 896,1100 910,1070 922,1040 935,920 948,1030 962,980 1000,990 1013,1020 1025,975 1038,985 1052,912 1065,950 1078,1020 1092,1125 1105,1045 1118,1005 1130,1080 1145,1075 1170,1163 1184,1040 1197,995 1210,1040 1222,1088 1235,1000 1248,1008 1262,982 1275,1000 1288,1150 1300,1115 1314,1150 1328,1130 1340,1235 1365,1250 1392,1235 1405,1272 1440,1260 1470,1287 1485,1190 1524,1188 1535,1145', { dots: 1, step: 6.5, jit: 5 })
  .squeeze(1393, 13, [737, 'r', 776, 'g', 1015, 'r', 1030, 'g', 1075, 'r', 1330, 'g', 1540]).axes(1700, 1479, 727, 0)
  .legend(743, [['RSI-W: 36.15', 735, MG], ['RSI: 37.17', 866, LV]]).legend(1373, [['Bollinger Squeeze 3', 733, WH], ['Squeeze Indicator: 0.000', 935, RD], ['(Last, Smp, 20, 1.5, 2)', 1187, WH]])
  .times(1508, '2025-3-19@785@b|21:30@882|22:45@946|3-20@1011@b|1:15@1077|2:30@1142|3:45@1208|5:00@1273|6:15@1338|7:30@1404|8:45@1469|10:00@1534');

// AUDCHF
chart('cF', -10, 0, .7589, .4401, 41)
  .volume('17,1370 30,1400 60,1280 80,1400 120,1365 165,1360 190,1400 220,1310 272,1220 285,1390 348,1300', 5.3, 1418)
  .v(29, 29, 1420).v(348, 29, 957, '#002000', 3).h(887, 17, 474)
  .candles('17,260 28,285 40,240 55,225 65,245 75,150 85,85 95,100 112,90 122,165 137,120 150,230 157,240 165,380 178,410 190,390 207,365 220,400 235,580 247,470 258,430 272,460 278,380 285,375 297,410 302,555 315,490 328,600 335,570 342,600 348,610', 5.3, { noise: 20, orange: .08, blue: 1 })
  .curve(YL, '17,290 40,278 65,260 80,220 95,160 110,120 120,112 130,132 148,132 160,175 175,290 190,350 205,370 220,375 230,410 245,470 265,460 285,425 297,415 310,450 330,500 348,555')
  .curve('#d80000', '17,335 45,290 75,245 100,185 125,155 145,145 160,180 180,270 200,320 225,350 245,400 265,432 285,430 297,425 315,460 348,520')
  .curve(MG, '17,420 75,400 125,360 165,343 225,350 270,368 300,370 348,392').h(381, 285, 348, BL)
  .rsi([1074, 1174, 1244, 1305], 17, 348, '17,1140 30,1185 45,1120 60,1205 70,1130 85,1090 95,1140 108,1130 120,1230 135,1185 150,1250 167,1335 185,1320 205,1240 215,1270 235,1340 248,1220 262,1215 278,1165 295,1185 302,1280 312,1220 325,1290 335,1210 348,1240',
    '17,1130 30,1230 40,1090 48,1160 57,1035 65,1180 75,1080 85,1070 100,1065 108,1140 120,1260 137,1200 150,1280 168,1375 190,1330 198,1100 207,1075 220,1180 235,1360 248,1215 268,1080 275,1120 285,1110 305,1290 315,1260 325,1300 332,1185 348,1240', { step: 5.3, jit: 14 })
  .band(1417, [17, 'g', 33, 'r', 70, 'g', 138, 'r', 143, 'g', 350])
  .axes(474, 1420, 17, 29).scale(474, 59, 905, .563, .55, 14, 5).scale(474, 1004, 1338, 20000, 4000, 5, 0)
  .mark('0.55448', 474, 612).mark('0.55023', 474, 885).timer('12:06', 412, 90).symbol('AUDCHF', 91, 85, 'end')
  .text('RSI-W', 48, 978, WH, 'end').text('RSI-W: 37.29', 60, 978, MG)
  .times(1450, '2025-03-17   05:00:00@54@b|3-19@198@b|3-20@293@b|3-21@388@b|13:00@441').ext('2 E', 529, 1450);

// AUDJPY
chart('cG', -10, 0, .7589, .4401, 43)
  .volume('583,1270 620,1300 650,1350 700,1160 730,1370 780,1290 820,1150 850,1320 900,1290 940,1200 980,1390 1010,1290 1070,1200 1110,1400 1160,1290 1195,1250 1220,1150 1240,1390 1321,1260', 5.3, 1418)
  .v(620, 29, 1421, '#707070').v(1321, 29, 957, '#002000', 3).h(1200, 577, 1491)
  .candles('583,650 590,620 600,610 618,590 635,620 645,740 655,800 670,760 685,800 695,790 710,900 718,840 730,860 740,800 747,760 757,765 768,690 775,670 790,555 803,580 815,550 825,590 840,560 857,515 865,540 875,480 885,510 895,450 915,420 930,460 945,370 952,370 965,200 972,160 982,200 992,150 1010,140 1022,165 1035,110 1045,75 1053,160 1063,150 1073,220 1085,260 1100,280 1115,250 1128,210 1145,250 1155,195 1162,390 1173,290 1190,280 1205,270 1215,275 1225,370 1240,370 1248,430 1258,550 1270,490 1285,540 1293,560 1303,650 1315,715 1321,715', 5.3, { noise: 20, orange: .08, blue: 1 })
  .curve(YL, '583,685 600,665 620,630 635,627 655,690 675,725 695,755 715,810 740,835 765,790 790,680 815,610 840,590 875,550 905,500 940,450 965,340 985,250 1010,195 1035,160 1053,130 1068,140 1090,200 1115,242 1140,230 1160,235 1175,270 1200,285 1215,283 1235,325 1255,365 1275,430 1300,510 1321,608')
  .curve('#d80000', '583,725 610,685 635,658 660,685 690,715 715,770 745,802 770,790 795,720 820,655 850,625 885,590 920,525 950,460 975,360 1000,290 1030,220 1050,190 1068,180 1090,200 1115,228 1150,235 1180,262 1215,268 1245,310 1270,370 1295,440 1321,525')
  .curve(MG, '583,698 650,692 720,708 765,715 800,710 850,695 900,678 960,650 1000,620 1040,583 1070,560 1110,538 1150,515 1180,500 1225,482 1260,478 1300,482 1321,490')
  .line(OR, '1210,255 1235,355 1273,475').h(521, 1278, 1321, BL)
  .rsi([1074, 1174, 1244, 1305], 583, 1321, '583,1190 590,1160 605,1155 617,1140 630,1180 640,1255 655,1295 668,1250 685,1280 697,1245 710,1310 725,1245 738,1220 750,1170 765,1140 790,1085 805,1120 818,1110 830,1165 850,1130 868,1160 880,1125 895,1140 915,1100 930,1175 945,1110 968,1070 985,1120 1000,1100 1020,1150 1043,1090 1055,1200 1063,1180 1075,1280 1105,1300 1125,1180 1140,1240 1153,1170 1165,1290 1180,1230 1205,1200 1225,1260 1240,1255 1255,1310 1270,1270 1290,1290 1310,1335 1321,1315',
    '583,1170 595,1150 602,1190 612,1080 625,1140 640,1270 658,1360 670,1290 690,1270 697,1185 710,1320 725,1220 738,1180 753,1070 758,1120 775,1015 790,1012 805,1070 815,1075 832,1235 848,1100 860,1140 875,1075 890,1150 908,1050 920,1120 930,1140 943,1090 968,1015 980,1080 990,1045 1018,1150 1043,1080 1055,1210 1063,1180 1075,1300 1085,1355 1110,1320 1128,1120 1145,1160 1153,1110 1165,1290 1185,1200 1200,1215 1207,1070 1225,1290 1240,1280 1258,1350 1270,1270 1285,1300 1298,1270 1312,1360 1321,1340', { step: 5.3, jit: 12 })
  .band(1417, [580, 'g', 620, 'r', 648, 'g', 738, 'r', 758, 'g', 873, 'r', 895, 'g', 1065, 'r', 1070, 'g', 1153, 'r', 1185, 'g', 1323])
  .axes(1491, 1421, 580, 29).scale(1491, 92, 869, 95.6, 92.8, 8, 3).scale(1491, 1050, 1330, 40000, 10000, 4, 0)
  .mark('93.337', 1491, 719).mark('23647', 1491, 1200).timer('12:06', 1428, 90).symbol('AUDJPY', 1049, 85)
  .trade('[Sim2]  Trade: 3@92.521', 'DPL: 0.000P', 582, 50, 90)
  .legend(978, [['Volume', 582], ['Volume: 23485', 651, DR], ['Bollinger Squeeze 3', 775], ['RSI: 9.92', 937, '#00d8d8'], ['RSI-W', 1012], ['RSI-W: 16.93', 1069, MG]])
  .times(1450, '3-14@741@b|2025-03-13   01:00:00@637@b|9:00@788|3-16@857@b|3-17@904@b|3-18@994@b|9:00@1041|3-19@1120@b|9:00@1168|3-20@1247@b|9:00@1295|3-21@1373@b|9:00@1421|18:00@1470').ext('3 E', 1536, 1450);

// GBPUSD second screen
chart('cH', 1160, 0, .4847, .4337, 47)
  .volume('81,1290 105,1390 140,1320 160,1340 200,1200 250,1150 270,1290 310,1385 340,1300 400,1210 440,1200 490,1330 570,1320 590,1240 625,1230 680,1320 710,1370 740,1310 790,1290 848,1170 900,1380 960,1340 990,1250 1060,1240 1072,1150 1095,1380 1130,1310 1200,1220 1229,1200', 8.26, 1400)
  .v(81, 88, 1405, '#707070').v(1230, 88, 965, '#002000', 3).h(905, 72, 1491)
  .candles('81,515 95,535 120,525 148,505 160,555 175,565 185,600 200,610 208,560 218,690 232,690 240,660 248,570 257,620 268,635 280,650 290,610 310,590 322,565 335,630 350,650 362,640 370,605 380,650 390,720 402,700 412,650 430,640 440,650 447,720 457,780 467,720 487,670 505,690 525,715 537,670 560,675 580,700 595,660 603,590 612,490 625,500 640,450 655,410 678,370 690,400 715,430 735,445 750,480 775,470 790,380 803,345 815,525 828,510 845,510 857,360 870,320 890,330 915,350 930,380 942,365 960,430 980,495 1000,490 1007,525 1018,475 1030,520 1055,490 1065,525 1072,320 1085,370 1095,335 1118,300 1130,340 1148,310 1160,360 1175,430 1182,490 1195,495 1203,590 1215,580 1222,590 1229,630', 8.26, { noise: 20, orange: .1, blue: 1 })
  .curve(YL, '81,590 100,555 160,535 205,565 225,570 245,612 290,618 320,605 350,622 380,625 412,660 440,655 465,690 500,697 540,697 560,688 600,683 625,620 650,540 680,470 710,430 740,430 760,450 790,458 815,415 835,450 855,465 880,430 905,380 935,368 958,370 985,410 1020,465 1050,490 1072,495 1090,450 1115,390 1145,350 1168,345 1185,375 1205,430 1229,503')
  .curve('#d80000', '81,632 110,595 160,567 205,567 245,600 320,605 380,618 420,645 440,650 470,677 500,685 600,685 640,640 680,560 710,500 740,478 790,475 820,447 850,465 880,440 910,405 940,390 960,388 1000,415 1040,450 1075,470 1100,430 1130,395 1165,375 1190,390 1229,460')
  .curve(MG, '376,962 430,945 480,932 540,915 600,898 650,870 700,840 780,805 860,775 920,740 980,718 1060,700 1120,678 1180,653 1229,649')
  .line(OR, '81,890 1195,603').line(OR, '1063,563 1146,270')
  .rsi([1076, 1170, 1237, 1295], 81, 1230, '81,1148 115,1165 150,1150 165,1200 195,1240 207,1195 232,1275 248,1190 268,1225 285,1200 305,1215 323,1180 340,1225 355,1190 375,1220 395,1240 412,1190 425,1200 455,1265 475,1190 500,1200 520,1225 540,1180 578,1225 600,1130 612,1100 680,1070 690,1110 715,1140 735,1200 755,1240 775,1210 800,1120 818,1250 845,1230 860,1165 885,1140 910,1165 930,1200 945,1185 965,1240 985,1285 1000,1270 1010,1290 1017,1230 1030,1260 1060,1215 1067,1240 1073,1130 1090,1155 1118,1140 1135,1185 1150,1165 1165,1210 1180,1270 1200,1305 1215,1290 1229,1308',
    '81,1085 100,1120 108,1082 130,1240 150,1160 158,1240 168,1190 200,1275 210,1210 232,1280 248,1175 275,1220 298,1140 312,1175 323,1130 340,1220 355,1180 375,1215 388,1285 402,1210 412,1170 425,1195 455,1230 475,1180 490,1210 520,1115 530,1150 538,1125 560,1190 580,1195 590,1115 605,1095 612,1050 640,1040 645,1010 678,1010 690,1090 705,1120 720,1180 735,1270 745,1365 760,1300 778,1270 800,1100 820,1210 865,1180 883,1020 892,1055 900,1038 915,1085 935,1310 942,1245 985,1325 1000,1290 1008,1340 1017,1250 1040,1240 1060,1185 1068,1230 1075,1095 1083,1130 1092,1095 1132,1090 1140,1185 1148,1110 1165,1230 1182,1330 1210,1352 1229,1350', { step: 8.26, jit: 6 })
  .band(1399, [77, 'g', 175, 'r', 225, 'g', 242, 'r', 605, 'g', 777, 'r', 792, 'g', 843, 'r', 860, 'g', 1233])
  .axes(1491, 1405, 72, 88).scale(1491, 158, 952, 1.304, 1.288, 9, 5).scale(1491, 1070, 1293, 30000, 10000, 3, 0)
  .mark('1.29435', 1491, 636).mark('1.28894', 1491, 905).timer('12:06', 1395, 149).symbol('GBPUSD', 810, 144)
  .trade('[Sim2]  Trade: 5@1.28894', 'DPL: 0.00000P', 80, 108, 147)
  .legend(986, [['Volume', 82], ['Volume: 14572', 188, DR], ['Bollinger Squeeze 3', 383], ['RSI: 4.52', 637, '#00d8d8'], ['RSI-W', 753], ['RSI-W: 17.95', 842, MG]])
  .times(1435, '3-13@254@b|2025-03-12   19:00:00@113@b|3-14@328@b|11:00@413|3-16@501@b|3-17@575@b|3-18@716@b|9:00@790|3-19@914@b|9:00@989|3-20@1112@b|9:00@1187|3-21@1310@b|9:00@1385|18:00@1461');

// CADCHF
chart('cI', -540, 780, .6378, .3571, 53)
  .volume('851,1300 860,1160 870,1380 885,1340 900,1200 915,1100 930,1200 945,1370 958,1300 971,1340', 3, 1390)
  .v(860, -310, 1398).h(272, 851, 1390)
  .candles('851,520 858,490 868,400 880,380 895,375 905,440 915,400 922,380 935,430 950,470 965,460 990,450', 3.2, { noise: 30, orange: .2 })
  .curve(YL, '851,510 865,505 885,440 903,395 920,410 935,405 950,435 971,455').curve('#d80000', '851,520 868,510 890,440 905,420 920,418 940,415 971,445')
  .curve(MG, '851,240 870,252 920,275 990,306').line(OR, '851,165 990,228').h(-257, 851, 990, BL)
  .rsi([972, 1096, 1183, 1258], 851, 1000, '851,1130 860,1080 868,1100 880,1055 890,1050 900,1110 905,1210 912,1090 920,1130 930,1100 945,1190 955,1170 990,1190',
    '851,1140 862,1090 875,970 888,925 896,1000 905,1270 912,1110 922,1150 930,1080 940,1270 955,1220 962,1180 990,1140', { step: 3, jit: 18 })
  .band(1396, [851, 'g', 913, 'r', 993, 'g', 1020, 'r', 1050, 'g', 1100, 'r', 1130, 'g', 1375])
  .axes(1391, 1402, 851, -310).symbol('CADCHF', 936, -258, 'end').text('RSI-W', 887, 856, WH, 'end').text('RSI-W: 80.41', 901, 856, MG)
  .times(1437, '2025-03-11   19:00:00@885@b|3-14@1025@b|3-16@1094@b|3-17@1151@b|3-18@1207@b|3-19@1263@b|3-20@1326@b').ext('1 E', 1459, 1437);

// CADJPY
chart('cJ', 1080, 640, .5357, .4337, 59)
  .v(41, 67, 1479).h(1243, -1200, 64).axes(64, 1479, -1200, 67).scale(64, 117, 992, 154, 146, 9, 3).scale(64, 1113, 1388, 80000, 20000, 4, 0)
  .mark('148.746', 64, 692).mark('51093', 64, 1243).timer('12:06', -20, 131)
  .trade('[Sim2]  Trade: 1@152.999', 'DPL: 0.000P', -1208, 85, 130)
  .map(-10, 1240, .7589, .4764).band(81, [577, 'g', 745, 'r', 760, 'g', 890, 'r', 935, 'g', 1120, 'r', 1145, 'g', 1270, 'r', 1290, 'g', 1440])
  .times(112, '2025-2-11@620@b|2-16@688@b|2-18@734@b|2-19@780@b|2-21@826@b|2-24@872@b|2-26@918@b|2-27@964@b|3-3@1006@b|3-4@1042@b|3-5@1079@b|3-6@1116@b|3-7@1153@b|3-10@1195@b|3-12@1242@b|3-13@1288@b|3-17@1333@b|Fri 2025-03-21   12:00:00@1466@b');

// GBPCHF
chart('cK', 1080, 640, .5357, .4337, 61)
  .volume('221,1300 260,1300 280,1380 300,1420 345,1300 385,1200 405,1290 430,1440 470,1400 500,1250 520,1340 555,1440 600,1400 640,1300 690,1420 750,1350 790,1290 830,1420 910,1290 950,1400 1050,1290 1080,1420 1150,1300 1210,1250 1240,1420 1319,1320', 5.6, 1470)
  .v(808, 67, 1479, '#707070').v(1318, 67, 1008, '#240000', 3).h(75, 212, 1498, '#707070')
  .candles('221,735 230,700 245,650 257,580 270,640 285,660 300,690 312,750 322,700 335,680 345,620 352,520 365,480 375,520 387,580 393,520 405,480 410,395 425,410 440,410 460,430 475,465 487,460 497,420 505,450 515,400 527,350 540,380 560,400 585,410 605,420 625,450 640,410 655,345 668,360 680,400 693,430 705,390 735,375 755,420 770,340 783,310 795,400 815,360 830,370 843,400 860,380 893,400 905,350 915,370 930,385 960,370 985,375 1000,405 1020,385 1033,400 1045,470 1062,520 1080,490 1100,495 1115,485 1135,510 1155,555 1170,520 1190,455 1212,450 1225,460 1240,490 1260,500 1275,520 1288,555 1295,415 1308,415 1319,390', 5.6, { noise: 20, orange: .12, blue: 1 })
  .curve(YL, '221,665 240,680 255,655 275,640 295,650 312,680 325,700 340,695 360,650 380,570 400,530 420,470 440,440 465,432 490,455 510,435 535,405 555,395 580,403 605,410 630,420 650,405 670,382 700,390 735,382 760,390 775,385 790,362 810,375 850,385 900,385 915,375 940,378 990,375 1030,392 1050,430 1075,470 1100,485 1130,493 1150,515 1170,527 1195,500 1220,465 1245,470 1270,485 1290,513 1319,455')
  .curve('#d80000', '221,640 240,665 300,652 320,680 345,680 375,630 400,600 420,540 445,485 480,467 510,455 535,425 560,412 600,415 640,420 670,398 700,397 760,388 800,375 850,380 1000,378 1035,385 1060,425 1085,455 1110,470 1140,490 1165,510 1190,500 1220,483 1260,490 1290,500 1319,467')
  .curve(MG, '221,572 260,578 350,593 400,588 440,573 500,562 560,545 640,525 700,512 780,493 860,478 950,463 1040,453 1100,458 1180,467 1319,468')
  .line(OR, '221,690 1300,573').line(OR, '787,296 1290,404').line(OR, '1096,477 1290,400').line(OR, '1215,430 1295,515')
  .h(575, 215, 258, BL).h(588, 258, 350, BL).h(720, 318, 1319, BL)
  .rsi([1126, 1225, 1297, 1359], 220, 1319, '221,1325 235,1270 245,1225 257,1200 275,1270 300,1285 312,1330 335,1265 350,1180 362,1155 375,1190 385,1255 400,1190 408,1165 435,1185 450,1215 475,1270 495,1250 515,1240 530,1210 545,1260 575,1270 590,1250 620,1300 635,1220 655,1200 675,1255 690,1220 700,1270 720,1240 740,1240 755,1285 782,1180 795,1290 820,1250 835,1310 850,1265 870,1280 893,1290 903,1210 920,1240 945,1250 955,1290 980,1250 1000,1300 1017,1240 1030,1320 1045,1320 1062,1375 1080,1320 1100,1310 1125,1290 1157,1360 1170,1240 1190,1205 1215,1210 1240,1285 1268,1280 1287,1350 1293,1195 1319,1180',
    '221,1350 245,1210 262,1135 275,1220 295,1270 305,1385 315,1340 330,1280 352,1090 362,1062 375,1100 385,1230 390,1160 402,1220 415,1170 430,1105 445,1150 460,1280 475,1370 490,1300 500,1190 520,1210 530,1160 537,1220 545,1170 560,1270 575,1360 590,1280 615,1340 635,1190 665,1160 680,1240 685,1190 700,1330 720,1290 737,1120 755,1310 782,1160 800,1220 830,1340 845,1230 865,1300 890,1250 893,1320 902,1160 918,1220 935,1190 955,1300 970,1210 985,1210 1000,1320 1020,1260 1040,1340 1062,1390 1075,1310 1100,1220 1108,1190 1125,1220 1157,1415 1175,1230 1193,1140 1205,1190 1215,1140 1240,1330 1255,1380 1275,1330 1287,1365 1295,1170 1312,1160 1319,1110', { step: 5.6, jit: 10 })
  .band(1472, [217, 'g', 260, 'r', 307, 'g', 312, 'r', 322, 'g', 497, 'r', 777, 'g', 783, 'r', 1033, 'g', 1135, 'r', 1185, 'g', 1257, 'r', 1275, 'g', 1322])
  .axes(1498, 1479, 212, 67).scale(1498, 147, 966, 1.152, 1.138, 8, 5).scale(1498, 1060, 1409, 30000, 5000, 6, 0)
  .mark('1.15449', 1498, 77).mark('1.14860', 1498, 388).timer('12:06', 1410, 131).symbol('GBPCHF', 879, 127)
  .trade('[Sim2]  Trade: 3@1.15449', 'DPL: 0.00000P', 220, 89, 130)
  .legend(1029, [['Volume', 220], ['Volume: 7393', 318, DG], ['Bollinger Squeeze 3', 480], ['RSI: 84.89', 710, '#00d8d8'], ['RSI-W', 829], ['RSI-W: 73.92', 910, MG]])
  .times(1507, '3-18@970@b|2025-3-10@275@b|3-11@371@b|3-12@439@b|3-13@567@b|Fri 2025-03-14   19:00:00@808@b|3-19@1104@b|3-20@1239@b|3-21@1373@b|13:00@1449');

// EURAUD
chart('cL', -10, 1240, .7589, .4764, 67)
  .volume('28,1450 46,1440 55,1330 82,1240 110,1300 145,1150 183,1180', 9.1, 1455)
  .v(27, 178, 1460).v(183, 178, 1030, '#240000', 6)
  .candles('19,670 28,735 37,720 46,690 55,740 64,490 73,440 82,445 91,530 100,570 109,550 118,480 128,455 137,430 147,320 156,315 165,255 174,350', 9.1, { noise: 26, orange: .12, blue: 1 })
  .bar(183, 7, 288, 350, 254, 365, WH)
  .curve(YL, '17,535 40,600 65,650 80,600 95,560 120,555 145,515 165,440 183,400').curve('#d80000', '17,530 45,570 65,600 85,570 120,560 150,530 183,460')
  .curve(MG, '17,675 65,675 100,667 140,660 183,645').line(OR, '17,370 275,394').line(OR, '17,283 173,196').line(OR, '55,180 173,196').v(174, 196, 345, OR)
  .rsi([1138, 1228, 1294, 1351], 17, 183, '17,1330 35,1325 45,1315 55,1320 65,1220 85,1215 95,1260 110,1260 125,1230 145,1185 165,1175 175,1225 183,1210',
    '17,1335 38,1355 50,1320 57,1310 65,1225 75,1220 83,1150 93,1200 103,1185 120,1185 130,1150 138,1210 147,1185 158,1180 167,1098 176,1150 183,1142', { step: 9.2, jit: 4 })
  .squeeze(1453, 9.2, [19, 'g', 186])
  .axes(472, 1460, 17, 178).scale(472, 240, 955, 1.726, 1.71, 9, 5).scale(472, 1125, 1391, 25000, 5000, 5, 0)
  .mark('1.72483', 472, 290).timer('12:06', 410, 235).symbol('EURAUD', 90, 230, 'end')
  .text('RSI-W', 57, 1051, WH, 'end').text('RSI-W: 65.97', 68, 1051, MG)
  .times(1486, '11:00@157|2025-03-19   21:00:00@53@b|17:00@213|3-21@275@b|5:00@321|11:00@377|17:00@433').ext('1 E', 527, 1486).mark('1.69781', 472, 1497);

// EURJPY
chart('cM', -10, 1240, .7589, .4764, 71)
  .volume('582,1330 610,1400 640,1250 655,1400 705,1200 735,1400 765,1200 800,1400 830,1180 860,1400 900,1250 930,1400 957,1150 990,1380 1020,1230 1050,1400 1080,1270 1110,1420 1150,1300 1180,1420 1210,1290 1240,1420 1275,1300 1300,1400 1350,1240 1370,1400 1399,1350', 3, 1455)
  .v(1332, 182, 1464).v(1399, 182, 1033, '#001800', 2).h(215, 577, 1484, '#707070')
  .candles('582,825 590,860 600,900 607,960 620,900 635,920 643,970 650,850 658,680 665,690 680,690 690,610 700,620 712,550 725,530 733,490 743,510 750,600 760,650 770,590 780,660 790,630 803,650 815,590 825,570 832,630 845,550 860,600 877,600 885,650 897,660 905,640 920,660 935,620 943,540 952,510 957,450 968,500 975,460 990,450 1000,430 1010,390 1025,430 1040,465 1055,470 1065,540 1075,500 1085,545 1098,580 1115,530 1130,470 1140,400 1150,465 1165,440 1175,430 1190,400 1205,410 1215,370 1223,320 1240,300 1255,270 1262,220 1272,280 1290,275 1315,265 1320,350 1330,270 1345,300 1352,380 1368,420 1380,440 1390,490 1399,510', 3, { noise: 20, orange: .2, blue: 1 })
  .curve(YL, '582,840 595,845 610,900 630,915 648,940 658,880 670,770 690,690 710,610 730,545 745,515 760,570 780,615 810,635 830,605 848,580 870,595 890,620 910,645 935,655 948,620 960,560 975,510 995,475 1012,430 1025,415 1045,450 1070,490 1090,540 1105,550 1130,510 1150,460 1175,445 1205,420 1225,370 1250,310 1268,262 1290,270 1345,285 1360,330 1380,390 1399,465')
  .curve('#d80000', '582,870 600,870 625,920 648,930 665,850 690,740 720,640 745,570 765,580 800,620 830,620 850,590 880,600 905,630 935,648 960,590 990,520 1015,455 1030,440 1055,460 1080,500 1105,545 1130,525 1160,470 1200,430 1230,390 1260,310 1280,280 1345,283 1370,340 1399,425')
  .curve(MG, '582,885 620,888 650,892 665,885 690,865 720,838 750,800 790,778 830,755 880,722 940,712 970,690 1000,660 1030,630 1060,612 1110,605 1150,585 1200,555 1240,520 1270,490 1310,460 1350,441 1399,440')
  .h(564, 845, 941, BL)
  .rsi([1142, 1233, 1298, 1355], 582, 1399, '582,1240 600,1310 615,1300 628,1250 640,1330 655,1165 680,1200 690,1185 705,1210 720,1180 737,1170 750,1300 762,1350 775,1260 790,1310 805,1270 822,1215 835,1280 855,1240 880,1310 900,1270 915,1310 930,1240 943,1170 957,1150 970,1210 1000,1215 1015,1170 1030,1300 1050,1290 1068,1350 1082,1290 1098,1320 1112,1240 1125,1220 1140,1150 1155,1240 1165,1220 1180,1200 1195,1250 1205,1240 1222,1170 1245,1185 1260,1150 1280,1250 1300,1240 1312,1210 1320,1270 1342,1250 1352,1320 1370,1340 1388,1320 1399,1370', null, { step: 3, jit: 18 })
  .band(1458, [580, 'g', 635, 'r', 652, 'g', 792, 'r', 880, 'g', 895, 'r', 940, 'g', 985, 'r', 1003, 'g', 1105, 'r', 1120, 'g', 1175, 'r', 1215, 'g', 1300, 'r', 1348, 'g', 1401])
  .axes(1484, 1464, 577, 182).scale(1484, 315, 983, 163, 156, 8, 3).scale(1484, 1133, 1398, 100000, 20000, 5, 0)
  .mark('164.034', 1484, 215).mark('160.993', 1484, 507).timer('12:06', 1422, 239).symbol('EURJPY', 1043, 234)
  .trade('[Sim2]  Trade: 3@164.034', 'DPL: 0.000P', 582, 201, 237)
  .legend(1054, [['Volume', 582], ['Volume: 32534', 651, DG], ['Bollinger Squeeze 3', 775], ['RSI: 18.19', 937, '#00d8d8'], ['RSI-W', 1021], ['RSI-W: 20.34', 1078, MG]])
  .times(1491, '2025-3-3@615@b|3-5@673@b|3-6@726@b|3-7@789@b|3-9@850@b|3-10@892@b|3-11@939@b|3-12@986@b|3-13@1044@b|3-14@1107@b|3-16@1165@b|3-17@1213@b|Wed 2025-03-19   13:00:00@1331@b|19:00@1476').ext('1 E', 1540, 1491);

// GBPCAD
chart('cN', 1160, 1300, .4847, .4381, 73)
  .volume('81,1320 110,1200 140,1350 160,1420 185,1340 230,1260 260,1200 290,1350 310,1420 330,1350 360,1300 400,1150 440,1340 465,1420 500,1350 550,1220 580,1280 610,1420 640,1330 705,1220 750,1420 790,1370 840,1290 890,1400 915,1370 940,1390 1000,1230 1045,1420 1075,1370 1120,1310 1180,1200 1205,1430 1230,1380 1295,1270', 6.2, 1448)
  .v(266, 58, 1450, '#707070').h(65, 72, 1491, '#707070')
  .candles('81,740 90,600 100,480 110,510 125,550 145,590 160,590 175,600 190,550 210,570 220,500 235,490 247,540 252,460 262,210 270,310 283,240 290,430 300,380 315,400 330,430 345,410 368,400 385,410 400,500 418,430 430,450 440,510 455,490 470,530 485,490 505,470 520,490 530,530 545,580 555,520 570,500 578,370 590,400 603,350 615,390 640,415 652,395 665,480 685,450 700,470 712,630 725,600 750,610 760,620 775,580 800,580 808,620 835,530 850,590 865,640 885,660 910,645 930,658 955,655 975,640 985,700 1000,720 1010,590 1025,545 1040,590 1070,605 1085,580 1105,615 1130,620 1150,655 1160,610 1180,540 1195,500 1222,490 1240,510 1255,530 1262,570 1275,530 1288,520 1295,540', 6.2, { noise: 20, orange: .1, blue: 1 })
  .bar(262, 3, 205, 480, 200, 490, OR).bar(1288, 3, 510, 538, 438, 545, MG)
  .curve(YL, '81,690 92,685 110,600 130,565 145,565 165,575 210,580 240,550 265,525 278,440 290,378 310,395 345,405 385,403 405,435 440,450 470,500 490,500 520,482 540,508 555,518 575,500 600,430 630,403 660,403 680,430 700,455 720,520 745,560 775,590 815,595 850,573 880,600 910,640 940,650 980,650 1008,682 1030,635 1060,605 1095,595 1130,605 1160,620 1185,590 1210,550 1245,520 1280,528 1295,527')
  .curve('#d80000', '81,693 110,650 150,600 210,585 245,570 268,545 290,450 330,440 375,418 405,430 450,445 480,475 530,485 560,497 590,480 620,435 650,423 690,430 720,470 750,530 790,570 850,575 890,600 940,635 980,638 1010,663 1040,628 1090,612 1130,612 1165,618 1200,590 1240,550 1270,538 1295,540')
  .curve(MG, '217,985 262,950 305,908 350,875 400,838 460,803 530,770 580,752 650,712 710,690 780,681 860,670 1000,668 1080,659 1180,650 1240,640 1295,630')
  .line(OR, '287,245 1190,505').line(OR, '860,590 1225,495').line(OR, '998,792 1300,550').line(OR, '1150,660 1232,468')
  .rsi([1103, 1202, 1272, 1334], 81, 1295, '81,1270 90,1180 103,1135 115,1180 135,1190 160,1240 180,1240 200,1220 215,1190 230,1170 245,1210 262,1130 270,1200 283,1170 290,1240 310,1230 330,1240 350,1220 375,1230 398,1310 410,1250 422,1230 440,1260 455,1250 470,1285 485,1240 503,1210 520,1230 543,1320 560,1240 578,1150 590,1180 603,1165 620,1210 640,1230 650,1215 668,1290 690,1250 715,1350 735,1310 760,1310 775,1240 805,1265 833,1185 855,1270 885,1300 910,1270 940,1290 965,1265 975,1230 988,1320 1000,1270 1015,1170 1040,1190 1065,1230 1085,1200 1105,1250 1130,1270 1148,1300 1160,1220 1185,1150 1215,1160 1235,1170 1250,1220 1260,1290 1275,1245 1290,1200 1297,1250', null, { step: 6.2, jit: 12 })
  .band(1446, [77, 'g', 198, 'r', 245, 'g', 397, 'r', 458, 'g', 478, 'r', 537, 'g', 543, 'r', 572, 'g', 813, 'r', 880, 'g', 953, 'r', 1010, 'g', 1115, 'r', 1183, 'g', 1283, 'r', 1298])
  .axes(1491, 1450, 72, 58).scale(1491, 150, 908, 1.88, 1.862, 10, 5).scale(1491, 1131, 1345, 30000, 10000, 3, 0)
  .mark('1.88404', 1491, 66).mark('1.86994', 1491, 541).timer('12:06', 1395, 120).symbol('GBPCAD', 810, 116)
  .trade('[Sim2]  Trade: 3@1.88404', 'DPL: 0.00000P', 80, 79, 119)
  .legend(1008, [['Volume', 80], ['Volume: 15141', 188, DR], ['Bollinger Squeeze 3', 382], ['RSI: 43.37', 637, '#00d8d8'], ['RSI-W', 768], ['RSI-W: 46.28', 857, MG]])
  .times(1480, '2@88@b|Tue 2025-03-11   16:00:00@265@b|3-13@464@b|3-14@612@b|3-16@749@b|3-17@823@b|3-18@909@b|3-19@1058@b|3-20@1207@b|3-21@1355@b|13:00@1440');
```
